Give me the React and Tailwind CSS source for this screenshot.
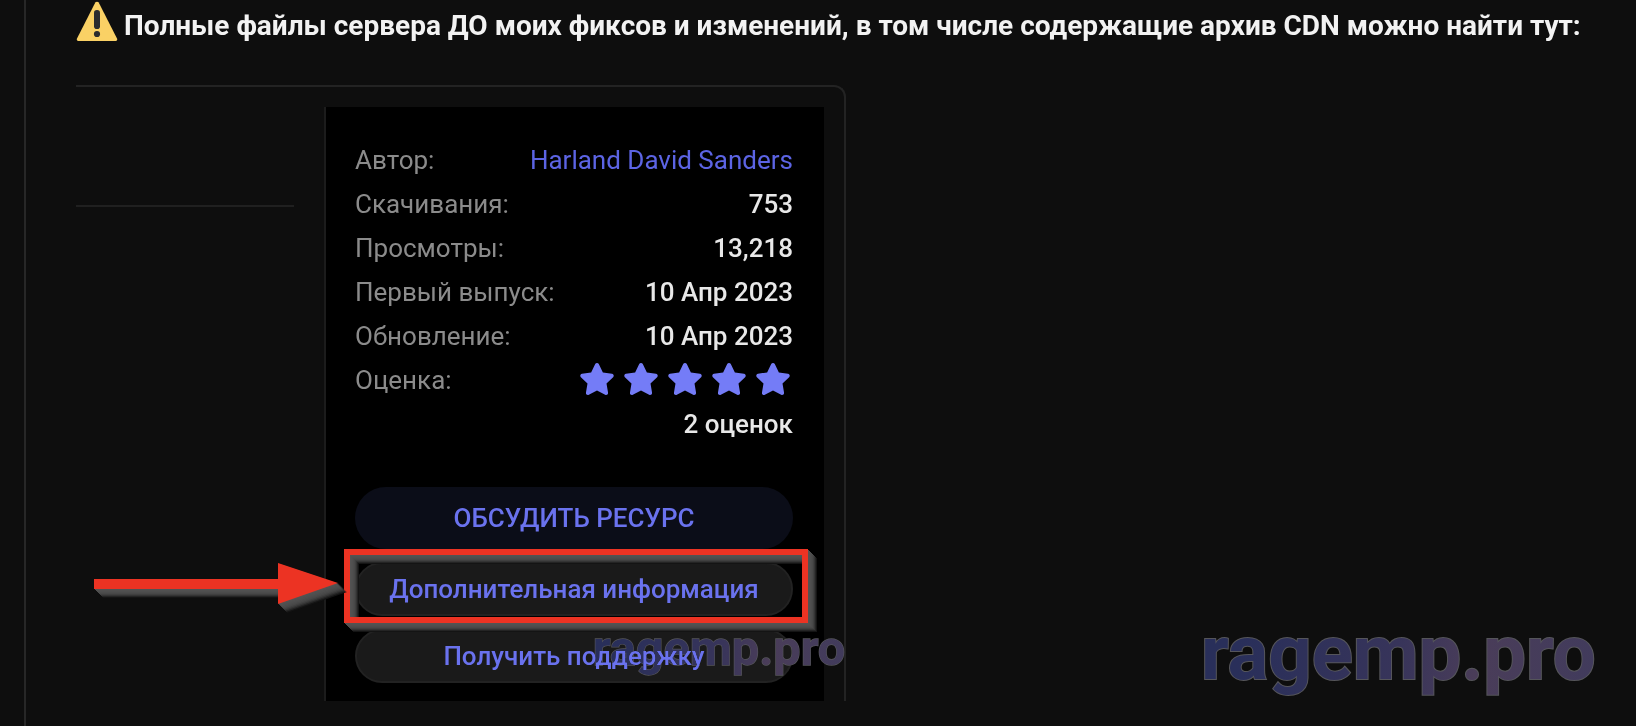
import { useId } from 'react';
import { FaStar } from 'react-icons/fa';

const stats = [
  { label: 'Автор:', value: 'Harland David Sanders', link: true },
  { label: 'Скачивания:', value: '753' },
  { label: 'Просмотры:', value: '13,218' },
  { label: 'Первый выпуск:', value: '10 Апр 2023' },
  { label: 'Обновление:', value: '10 Апр 2023' },
];

// Extruded shadow layers, nearest first
const shadowSteps = [
  '#535353', '#515151', '#4f4f4f', '#4c4c4c', '#484848', '#404040', '#343434', '#242424', '#141414',
];

const extrude = shadowSteps
  .flatMap((color, i) => [
    `${i + 1}px ${i + 1}px 0 ${color}`,
    `inset ${i + 1}px ${i + 1}px 0 ${color}`,
  ])
  .join(', ');

function WarningIcon() {
  return (
    <svg viewBox="0 0 42 42" className="w-[42px] h-[42px] shrink-0" aria-hidden="true">
      <path
        d="M19.3 2.6 C20 1.3 22 1.3 22.7 2.6 L41 38.6 C41.6 39.8 41 41 39.6 41 H2.4 C1 41 0.4 39.8 1 38.6 Z"
        fill="#fad165"
      />
      <rect x="18" y="10" width="6" height="19" rx="2.8" fill="#2b2c2e" />
      <circle cx="21" cy="34" r="3.1" fill="#2b2c2e" />
    </svg>
  );
}

function Arrow() {
  const points = '1,17 185,17 185,1 245,21 185,42 185,27 1,27';
  return (
    <svg
      viewBox="0 0 256 54"
      className="absolute left-[17px] top-[475px] w-[256px] h-[54px]"
      aria-hidden="true"
    >
      {shadowSteps
        .map((color, i) => (
          <polygon key={color} points={points} fill={color} transform={`translate(${i + 1} ${i + 1})`} />
        ))
        .reverse()}
      <polygon points={points} fill="#ec3323" />
    </svg>
  );
}

function Watermark({ className }) {
  const id = useId();
  return (
    <svg viewBox="0 0 400 90" className={`absolute pointer-events-none ${className}`}>
      <defs>
        <linearGradient id={id} gradientUnits="userSpaceOnUse" x1="0" y1="20" x2="395" y2="60">
          <stop offset="0.1" stopColor="#292f5a" />
          <stop offset="0.5" stopColor="#37345a" />
          <stop offset="0.7" stopColor="#4a3d59" />
          <stop offset="1" stopColor="#413b5c" />
        </linearGradient>
      </defs>
      <text
        x="1"
        y="69"
        fontSize="76"
        fontWeight="700"
        fill={`url(#${id})`}
        stroke="#55555a"
        strokeWidth="2"
        paintOrder="stroke"
      >
        ragemp.pro
      </text>
    </svg>
  );
}

/** Resource info sidebar: stats, rating and action buttons */
function ResourceCard() {
  return (
    <div className="flex-1 min-w-0 bg-black border-l-2 border-[#1c1c1c] pt-[31px] pb-[18px] pl-[29px] pr-[31px]">
      <dl className="text-[26px] leading-[44px]">
        {stats.map((row) => (
          <div key={row.label} className="flex justify-between">
            <dt className="text-[#8b8b8b]">{row.label}</dt>
            <dd className={row.link ? 'text-[#5c64e4]' : 'text-[#e8e8e8] font-medium'}>
              {row.link ? <a href="#author">{row.value}</a> : row.value}
            </dd>
          </div>
        ))}
        <div className="flex justify-between">
          <dt className="text-[#8b8b8b]">Оценка:</dt>
          <dd>
            <div className="flex items-center justify-end gap-2 h-11 pr-0.5 pb-0.5 text-[#747cf7]">
              {[1, 2, 3, 4, 5].map((n) => (
                <FaStar key={n} className="w-9 h-8" />
              ))}
            </div>
            <div className="text-right text-[#e8e8e8] font-medium">2 оценок</div>
          </dd>
        </div>
      </dl>

      <div className="flex flex-col mt-[41px] text-[26px] font-medium text-[#6a72ee]">
        <button className="h-[62px] rounded-full bg-[#0b0d18] uppercase">Обсудить ресурс</button>
        <div className="relative mt-[13px]">
          <button className="block w-full h-[54px] rounded-full bg-[#1a1a1a] border-2 border-[#222222]">
            Дополнительная информация
          </button>
          {/* Highlight frame */}
          <div
            className="absolute -left-[11px] -right-[15px] -top-[13px] -bottom-[7px] border-6 border-[#ec3323] pointer-events-none"
            style={{ boxShadow: extrude }}
          />
        </div>
        <button className="h-[54px] mt-[13px] rounded-full bg-[#1a1a1a] border-2 border-[#222222]">
          Получить поддержку
        </button>
      </div>
    </div>
  );
}

export default function App() {
  return (
    <div className="relative min-h-screen bg-[#0e0e0e] pl-6 font-[Roboto,sans-serif]">
      <main className="min-h-screen border-l-2 border-[#272727] pl-[50px]">
        <h1 className="flex gap-[6px] text-[28px] leading-[52px] font-bold text-[#f2f2f2]">
          <WarningIcon />
          Полные файлы сервера ДО моих фиксов и изменений, в том числе содержащие архив CDN можно найти тут:
        </h1>

        <div className="relative mt-[33px] max-w-[770px] flex border-t-2 border-r-2 border-[#232323] rounded-tr-xl pt-5 pr-5">
          <div className="w-[218px] shrink-0 mr-[30px]">
            <hr className="mt-[98px] border-t-2 border-[#202020]" />
          </div>
          <ResourceCard />
          <Arrow />
          <Watermark className="-right-1 bottom-[22px] w-[256px] mix-blend-lighten" />
        </div>
      </main>
      <Watermark className="right-9 bottom-[26px] w-[400px]" />
    </div>
  );
}
